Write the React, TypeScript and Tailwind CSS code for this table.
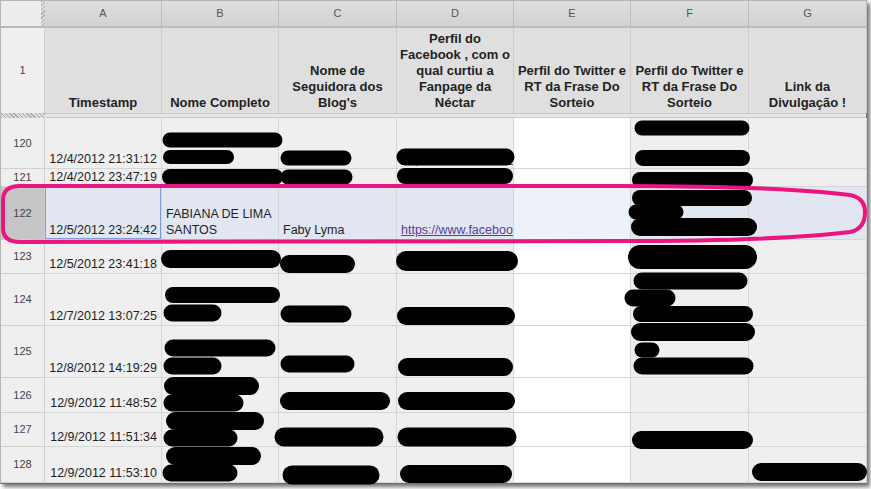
const FONT = { fontFamily: '"Liberation Sans", Arial, sans-serif' }

const colW = ['w-[117px]', 'w-[117px]', 'w-[118px]', 'w-[117px]', 'w-[117px]', 'w-[118px]', 'w-[118px]']
const letters = ['A', 'B', 'C', 'D', 'E', 'F', 'G']

const headers = [
  'Timestamp',
  'Nome Completo',
  "Nome de Seguidora dos Blog's",
  'Perfil do Facebook , com o qual curtiu a Fanpage da Néctar',
  'Perfil do Twitter e RT da Frase Do Sorteio',
  'Perfil do Twitter e RT da Frase Do Sorteio',
  'Link da Divulgação !',
]

type Row = {
  n: number
  h: string
  time: string
  name?: string
  nick?: string
  link?: string
  selected?: boolean
}

const rows: Row[] = [
  { n: 120, h: 'h-[51px]', time: '12/4/2012 21:31:12', link: 'https://www.faceboo' },
  { n: 121, h: 'h-[18px]', time: '12/4/2012 23:47:19' },
  {
    n: 122,
    h: 'h-[53px]',
    time: '12/5/2012 23:24:42',
    name: 'FABIANA DE LIMA SANTOS',
    nick: 'Faby Lyma',
    link: 'https://www.faceboo',
    selected: true,
  },
  { n: 123, h: 'h-[34px]', time: '12/5/2012 23:41:18', link: 'https://www.faceboo' },
  { n: 124, h: 'h-[52px]', time: '12/7/2012 13:07:25' },
  { n: 125, h: 'h-[52px]', time: '12/8/2012 14:19:29' },
  { n: 126, h: 'h-[35px]', time: '12/9/2012 11:48:52' },
  { n: 127, h: 'h-[34px]', time: '12/9/2012 11:51:34' },
  { n: 128, h: 'h-[36px]', time: '12/9/2012 11:53:10' },
]

// redaction strokes: [x1, y1, x2, y2, width]
const blobs: number[][] = [
  [170, 140, 275, 140, 15],
  [170, 157, 227, 157, 14],
  [170, 177, 275, 177, 16],
  [288, 158, 344, 158, 15],
  [288, 177, 345, 177, 15],
  [405, 157, 506, 157, 17],
  [405, 176, 505, 176, 16],
  [642, 128, 742, 128, 15],
  [643, 158, 742, 158, 16],
  [640, 180, 745, 180, 16],
  [640, 198, 744, 198, 16],
  [636, 212, 676, 212, 15],
  [640, 227, 748, 227, 18],
  [640, 257, 745, 257, 24],
  [642, 281, 739, 281, 17],
  [633, 298, 667, 298, 17],
  [641, 314, 745, 314, 16],
  [640, 332, 746, 332, 18],
  [642, 350, 652, 350, 15],
  [642, 366, 745, 366, 17],
  [641, 440, 744, 440, 18],
  [761, 472, 858, 472, 18],
  [170, 259, 272, 259, 18],
  [173, 295, 272, 295, 16],
  [172, 313, 213, 313, 17],
  [173, 348, 267, 348, 17],
  [172, 366, 213, 366, 17],
  [173, 386, 250, 386, 18],
  [172, 403, 235, 403, 17],
  [175, 421, 255, 421, 18],
  [172, 438, 229, 438, 17],
  [175, 456, 252, 456, 18],
  [171, 473, 229, 473, 17],
  [289, 264, 346, 264, 18],
  [289, 314, 343, 314, 17],
  [289, 364, 346, 364, 17],
  [289, 401, 381, 401, 18],
  [284, 437, 374, 437, 19],
  [292, 475, 370, 475, 19],
  [406, 261, 508, 261, 20],
  [406, 316, 506, 316, 18],
  [407, 367, 504, 367, 18],
  [407, 401, 506, 401, 18],
  [407, 437, 507, 437, 19],
  [409, 474, 503, 474, 18],
]

function cellBg(col: number, selected?: boolean) {
  if (selected) return col === 4 ? 'bg-[#edf1fa]' : 'bg-[#e1e6f1]'
  return col === 4 ? 'bg-white' : 'bg-[#efefef]'
}

function DataRow({ row }: { row: Row }) {
  const values = [row.time, row.name, row.nick, row.link, '', '', '']
  return (
    <div className={`flex ${row.h}`}>
      <div
        className={`flex w-[44px] shrink-0 items-center justify-center border-r border-b border-[#cfcfcf] text-[11px] text-[#444] ${
          row.selected ? 'bg-[#c6c6c6]' : 'bg-[#efefef]'
        }`}
      >
        {row.n}
      </div>
      {values.map((v, i) => (
        <div
          key={i}
          className={`flex shrink-0 items-end overflow-hidden border-r border-b border-[#d6d6d6] px-[4px] pb-[1px] text-[12.5px] leading-[16px] text-[#1e1e1e] ${
            colW[i]
          } ${cellBg(i, row.selected)} ${i === 0 ? 'justify-end' : 'justify-start'} ${
            i === 0 && row.selected ? 'ring-1 ring-inset ring-[#7d9bd6]' : ''
          }`}
        >
          {i === 3 && v ? (
            <span className="whitespace-nowrap text-[#5b3a9e] underline">{v}</span>
          ) : (
            <span className={i === 0 ? 'whitespace-nowrap' : ''}>{v}</span>
          )}
        </div>
      ))}
    </div>
  )
}

export default function App() {
  return (
    <div className="h-[489px] w-[871px] bg-white" style={FONT}>
      <div className="relative w-[867px] border-t border-l border-[#b5b5b5] border-r border-r-[#6f6f6f] border-b border-b-[#6f6f6f] shadow-[3px_3px_4px_rgba(0,0,0,0.55)]">
        {/* column letters */}
        <div className="flex h-[27px]">
          <div className="flex w-[44px] shrink-0 border-b-2 border-[#b9b9b9] bg-[#ececec]">
            <div className="w-[40px]" />
            <div className="w-[4px] bg-[repeating-linear-gradient(135deg,#a9a9a9_0px,#a9a9a9_1px,#dcdcdc_1px,#dcdcdc_3px)]" />
          </div>
          {letters.map((l, i) => (
            <div
              key={l}
              className={`flex shrink-0 items-center justify-center border-r border-b-2 border-[#bdbdbd] bg-[linear-gradient(#dedede,#d2d2d2)] text-[11px] text-[#555] ${colW[i]}`}
            >
              {l}
            </div>
          ))}
        </div>
        {/* header row 1 */}
        <div className="flex h-[85px]">
          <div className="flex w-[44px] shrink-0 items-center justify-center border-r border-[#cfcfcf] bg-[#efefef] text-[11px] text-[#444]">
            1
          </div>
          {headers.map((t, i) => (
            <div
              key={i}
              className={`flex shrink-0 items-end justify-center border-r border-[#cbcbcb] bg-[#dfdfdf] px-[2px] pb-[2px] text-center text-[13px] leading-[16px] font-bold text-[#222] ${colW[i]}`}
            >
              {t}
            </div>
          ))}
        </div>
        {/* frozen divider */}
        <div className="flex h-[5px]">
          <div className="w-[44px] shrink-0 bg-[repeating-linear-gradient(45deg,#a9a9a9_0px,#a9a9a9_1px,#dcdcdc_1px,#dcdcdc_3px)]" />
          <div className="flex-1 border-y border-[#c9c9c9] bg-[#e6e6e6]" />
        </div>
        {rows.map((r) => (
          <DataRow key={r.n} row={r} />
        ))}

        <svg className="pointer-events-none absolute top-[-1px] left-[-1px]" width="871" height="489">
          {blobs.map(([x1, y1, x2, y2, w], i) => (
            <line key={i} x1={x1} y1={y1} x2={x2} y2={y2} stroke="#000" strokeWidth={w} strokeLinecap="round" />
          ))}
          <path
            d="M20 186 L620 186 C720 186 800 189 850 195 Q865 198 865 212 Q865 229 850 232 C800 238 720 241 620 241 L20 242 Q3 242 3 228 L3 200 Q3 186 20 186 Z"
            fill="none"
            stroke="#ec1580"
            strokeWidth="4"
          />
        </svg>
      </div>
    </div>
  )
}
